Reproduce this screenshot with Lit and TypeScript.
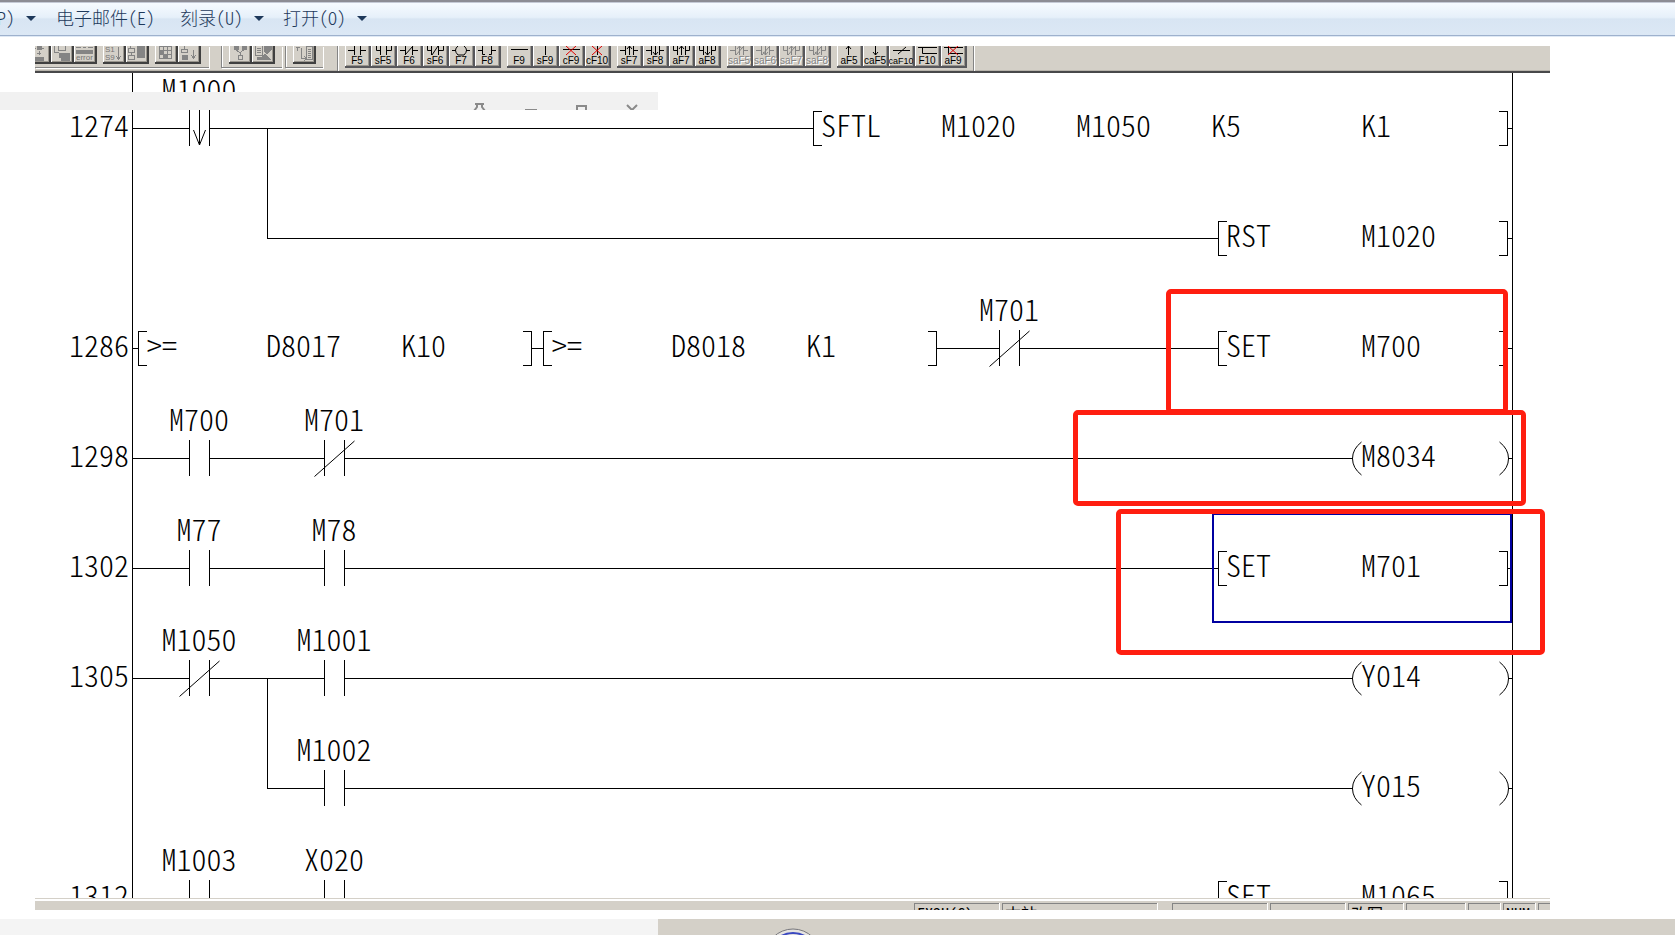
import { LitElement, html, svg, css } from "lit";
import { customElement, property } from "lit/decorators.js";

type Item =
  | { kind: "contact"; x: number; label: string; type?: "nc" | "fall" }
  | { kind: "text"; x: number; label: string }
  | { kind: "open" | "close" | "coil" | "coilEnd"; x: number };

interface Rung {
  step?: string;
  wires: [number, number][];
  branch?: number;
  items: Item[];
}

const c = (x: number, label: string, type?: "nc" | "fall"): Item => ({ kind: "contact", x, label, type });
const t = (x: number, label: string): Item => ({ kind: "text", x, label });
const s = (kind: "open" | "close" | "coil" | "coilEnd", x: number): Item => ({ kind, x });

/* x runs from the left edge of the editor; the power rails sit at 97 and 1477 */
const RUNGS: Rung[] = [
  { step: "1274", wires: [[97, 154], [174, 778], [1472, 1477]], branch: 232,
    items: [c(164, "M1000", "fall"), s("open", 778), t(786, "SFTL"), t(906, "M1020"), t(1041, "M1050"), t(1176, "K5"), t(1326, "K1"), s("close", 1472)] },
  { wires: [[232, 1183], [1472, 1477]],
    items: [s("open", 1183), t(1191, "RST"), t(1326, "M1020"), s("close", 1472)] },
  { step: "1286", wires: [[97, 103], [496, 508], [901, 964], [984, 1183], [1472, 1477]],
    items: [s("open", 103), t(112, ">="), t(231, "D8017"), t(366, "K10"), s("close", 496), s("open", 508), t(517, ">="), t(636, "D8018"), t(771, "K1"), s("close", 901), c(974, "M701", "nc"), s("open", 1183), t(1191, "SET"), t(1326, "M700"), s("close", 1472)] },
  { step: "1298", wires: [[97, 154], [174, 289], [309, 1317], [1473, 1477]],
    items: [c(164, "M700"), c(299, "M701", "nc"), s("coil", 1317), t(1326, "M8034"), s("coilEnd", 1473)] },
  { step: "1302", wires: [[97, 154], [174, 289], [309, 1183], [1472, 1477]],
    items: [c(164, "M77"), c(299, "M78"), s("open", 1183), t(1191, "SET"), t(1326, "M701"), s("close", 1472)] },
  { step: "1305", wires: [[97, 154], [174, 289], [309, 1317], [1473, 1477]], branch: 232,
    items: [c(164, "M1050", "nc"), c(299, "M1001"), s("coil", 1317), t(1326, "Y014"), s("coilEnd", 1473)] },
  { wires: [[232, 289], [309, 1317], [1473, 1477]],
    items: [c(299, "M1002"), s("coil", 1317), t(1326, "Y015"), s("coilEnd", 1473)] },
  { step: "1312", wires: [[97, 154], [174, 289], [309, 1183], [1472, 1477]],
    items: [c(164, "M1003"), c(299, "X020"), s("open", 1183), t(1191, "SET"), t(1326, "M1065"), s("close", 1472)] },
];

@customElement("ladder-rung")
class LadderRung extends LitElement {
  @property({ attribute: false }) rung!: Rung;

  static styles = css`
    :host { display: block; position: relative; height: 110px; flex: none; }
    svg { position: absolute; left: 0; top: 0; overflow: visible; }
    path { fill: none; stroke: #000; stroke-width: 1; }
    .crisp { shape-rendering: crispEdges; }
    .word {
      position: absolute;
      font-family: "Noto Sans CJK SC", sans-serif;
      font-feature-settings: "hwid";
      font-weight: 300;
      font-size: 30px;
      line-height: 30px;
      white-space: pre;
    }
    .on-wire { top: 46px; }
    .above { top: 10px; transform: translateX(-50%); }
    .step { left: 34px; }
  `;

  private shape(i: Item) {
    const x = i.x + 0.5;
    switch (i.kind) {
      case "contact":
        return svg`
          <path class="crisp" d="M${x - 10} 47V83M${x + 10} 47V83" />
          ${i.type === "nc" ? svg`<path d="M${x - 20} 83.5L${x + 20} 48" />` : ""}
          ${i.type === "fall" ? svg`<path d="M${x} 47V82M${x - 6} 67L${x} 82L${x + 6} 67" />` : ""}`;
      case "open":
        return svg`<path class="crisp" d="M${x + 8} 48.5H${x}V82.5H${x + 8}" />`;
      case "close":
        return svg`<path class="crisp" d="M${x - 9} 48.5H${x}V82.5H${x - 9}" />`;
      case "coil":
        return svg`<path d="M${x + 9} 49Q${x} 56 ${x} 65.5T${x + 9} 82" />`;
      case "coilEnd":
        return svg`<path d="M${x - 9} 49Q${x} 56 ${x} 65.5T${x - 9} 82" />`;
      default:
        return "";
    }
  }

  render() {
    const r = this.rung;
    return html`
      <svg width="1515" height="110" aria-hidden="true">
        ${r.wires.map(([a, b]) => svg`<path class="crisp" d="M${a} 65.5H${b + 1}" />`)}
        ${r.branch ? svg`<path class="crisp" d="M${r.branch + 0.5} 65V176" />` : ""}
        ${r.items.map((i) => this.shape(i))}
      </svg>
      ${r.step ? html`<span class="word on-wire step">${r.step}</span>` : ""}
      ${r.items.map((i) =>
        i.kind === "text"
          ? html`<span class="word on-wire" style="left:${i.x}px">${i.label}</span>`
          : i.kind === "contact"
            ? html`<span class="word above" style="left:${i.x}px">${i.label}</span>`
            : ""
      )}
    `;
  }
}

const L = (d: string, color = "#000") => svg`<path d=${d} stroke=${color} />`;
const WIRES: Record<string, unknown> = {
  F5: L("M3 4.5H9M15 4.5H21M9.5 0V9M15.5 0V9"),
  sF5: L("M5.5 0V4.5H9.5V0M9.5 4V9M15.5 9V0M15.5 4.5H20.5V0"),
  F6: L("M3 4.5H9M15 4.5H21M8.5 0V9M15.5 0V9M8 9L16 0"),
  sF6: L("M4.5 0V4.5H8.5V9V0M15.5 9V0M15.5 4.5H20.5V0M9 9L15 0"),
  F7: L("M3 4.5H7M17 4.5H21M9 0Q4 4 9 9H15Q20 4 15 0"),
  F8: L("M3 4.5H7.5V0M7.5 4V8.5H10M21 4.5H16.5V0M16.5 4V8.5H14"),
  F9: L("M4 3.5H21"),
  sF9: L("M12.5 0V9"),
  cF9: [L("M4 3.5H21"), L("M7 0L17 9M17 0L7 9", "#e00000")],
  cF10: [L("M12.5 0V9"), L("M7 0L17 9M17 0L7 9", "#e00000")],
  sF7: L("M3 4.5H8.5M16.5 4.5H21M8.5 0V9M16.5 0V9M12.5 9V0M10 3L12.5 0L15 3"),
  sF8: L("M3 4.5H8.5M16.5 4.5H21M8.5 0V9M16.5 0V9M12.5 0V9M10 6L12.5 9L15 6"),
  aF7: L("M4.5 0V4.5H8.5M8.5 0V9M16.5 0V9M16.5 4.5H20.5V0M12.5 9V0M10 3L12.5 0L15 3"),
  aF8: L("M4.5 0V4.5H8.5M8.5 0V9M16.5 0V9M16.5 4.5H20.5V0M12.5 0V9M10 6L12.5 9L15 6"),
  saF5: L("M3 4.5H8.5M16.5 4.5H21M8.5 0V9M16.5 0V9M9 9L16 1M12.5 9V0M10 3L12.5 0L15 3", "#848484"),
  saF6: L("M3 4.5H8.5M16.5 4.5H21M8.5 0V9M16.5 0V9M9 9L16 1M12.5 0V9M10 6L12.5 9L15 6", "#848484"),
  saF7: L("M4.5 0V4.5H8.5M8.5 0V9M16.5 0V9M16.5 4.5H20.5V0M9 9L16 1M12.5 9V0M10 3L12.5 0L15 3", "#848484"),
  saF8: L("M4.5 0V4.5H8.5M8.5 0V9M16.5 0V9M16.5 4.5H20.5V0M9 9L16 1M12.5 0V9M10 6L12.5 9L15 6", "#848484"),
  aF5: L("M11.5 9V0M9 3L11.5 0L14 3"),
  caF5: L("M12.5 0V9M10 6L12.5 9L15 6"),
  caF10: L("M4 4.5H21M9 8L17 1"),
  F10: L("M3 1.5H22M7.5 1V7.5H22"),
  aF9: [L("M3 1.5H22M7.5 1V7.5H22"), L("M7 0L17 9M17 0L7 9", "#e00000")],
};

const KEY_GROUPS = [
  ["F5", "sF5", "F6", "sF6", "F7", "F8"],
  ["F9", "sF9", "cF9", "cF10"],
  ["sF7", "sF8", "aF7", "aF8"],
  ["saF5", "saF6", "saF7", "saF8"],
  ["aF5", "caF5", "caF10", "F10", "aF9"],
];

const g = (d: string, fill = "none") => svg`<path d=${d} fill=${fill} stroke="#848484" />`;
const TOOLS: Record<string, unknown> = {
  Transfer: [g("M9 0H13V3H9ZM6 11H15V14H6Z", "#848484"), g("M5 2H8M14 2H16M11 5V9M9 7H13")],
  Copy: [g("M3.5 0V6.5H8M7.5 0V4.5H14.5V0"), g("M8 7H18V14H10V11H8Z", "#848484")],
  Error: [g("M2 1H7M9 1H12M14 1H19"), g("M2 4H18V7H2Z", "#848484")],
  Sort: [g("M15.5 1V13M13 10L15.5 13L18 10")],
  Block: [g("M4.5 0V2M2.5 2.5H8.5V6.5H2.5ZM5.5 7V9M2.5 9.5H8.5V13.5H2.5Z"), g("M11 0H18V11H11Z", "#848484")],
  Grid: [g("M4.5 0.5H16.5V12.5H4.5ZM4 4.5H17M4 8.5H17M8.5 0V13M12.5 0V13"), g("M5 5H8V8H5ZM9 9H12V12H9Z", "#848484")],
  Down: [g("M6.5 0V3M3.5 3.5H9.5V6.5H3.5Z"), g("M4 9H9V13H4Z", "#848484"), g("M15.5 4V12M13 9L15.5 12L18 9")],
  Branch: [g("M5 0H9V3H5ZM13 0H17V3H13Z", "#848484"), g("M7.5 4L11 7L14.5 4M11.5 7V9M9.5 9.5H13.5V13H9.5Z")],
  Edit: [g("M3.5 0V9.5H10.5V0M5 2H9M5 4H9M5 6H9"), g("M13 0H19V4L15 8L12 5ZM5 11H10L13 8L18 13H5Z", "#848484")],
  List: [g("M3 1H7M4.5 1V5M8.5 2V12.5H13M11 10L13.5 12.5L11 15"), g("M13.5 0H19.5V13.5H13.5ZM15 3H18M15 5H18M15 7H18M15 9H18M15 11H18")],
};

const tool = (name: string) => html`
  <button class="tool" aria-label=${name}>
    <svg width="21" height="16" viewBox="0 0 21 16" shape-rendering="crispEdges">${TOOLS[name]}</svg>
    ${name === "Error" ? html`<span class="tiny low">error</span>` : ""}
    ${name === "Sort" ? html`<span class="tiny stack">S1<br />S9</span>` : ""}
  </button>`;

@customElement("app-root")
class AppRoot extends LitElement {
  static styles = css`
    :host {
      display: flex;
      flex-direction: column;
      height: 100vh;
      overflow: hidden;
      position: relative;
      background: #fff;
      color: #000;
      font-family: "Liberation Sans", sans-serif;
    }
    button { font: inherit; color: inherit; background: none; border: 0; padding: 0; margin: 0; }

    .menu {
      flex: none;
      box-sizing: border-box;
      height: 37px;
      display: flex;
      align-items: flex-start;
      padding-top: 2px;
      border-top: 2px solid #8c8c94;
      border-bottom: 1px solid #dfe9f5;
      box-shadow: inset 0 -1px #9eb1cd, inset 0 1px #c5cad6;
      background: linear-gradient(#f7fbff 0, #e6f0fa 45%, #d8e5f3 50%, #dce8f5 100%);
      overflow: hidden;
    }
    .menu button {
      display: flex;
      align-items: center;
      flex: none;
      color: #1e395b;
      font-family: "Noto Sans CJK SC", sans-serif;
      font-feature-settings: "hwid";
      font-weight: 300;
      font-size: 18px;
      line-height: 26px;
      white-space: pre;
    }
    .menu i { width: 0; margin: 3px 0 0 11px; border: 5px solid transparent; border-top-color: #1e395b; border-bottom: 0; }
    .clip-left { margin-left: -12px; }
    .menu .clip-left { margin-left: -12px; }
    .menu .mail { margin-left: 20px; }
    .menu .burn { margin-left: 25px; }
    .menu .open { margin-left: 19px; }

    .editor { flex: none; margin: 9px 0 0 35px; width: calc(100% - 160px); display: flex; flex-direction: column; }
    .toolbar {
      box-sizing: border-box;
      height: 27px;
      display: flex;
      align-items: flex-start;
      background: #d4d0c8;
      border-bottom: 2px solid #48484a;
      box-shadow: inset 0 -1px #b8b4ac;
      overflow: hidden;
    }
    .dock {
      flex: none;
      display: flex;
      height: 22px;
      gap: 6px;
      padding: 0 7px;
      box-sizing: border-box;
      border: 1px solid #848484;
      border-width: 0 0 1px 1px;
      box-shadow: 1px 1px #fff, inset 1px 0 #fff;
    }
    .dock.first { padding: 0 8px 0 0; border-left: 0; box-shadow: 1px 1px #fff; }
    .dock.second { margin-left: 12px; }
    .dock.third { margin-left: 3px; }
    .set { display: flex; flex: none; }
    .tool {
      position: relative;
      flex: none;
      box-sizing: border-box;
      width: 23px;
      height: 18px;
      border: solid #404040;
      border-width: 0 2px 2px 0;
      box-shadow: inset 1px 0 #fff, inset -1px -1px #9a968e;
      overflow: hidden;
    }
    .tool svg, .key svg { display: block; }
    .cut { width: 16px; flex: none; overflow: hidden; display: flex; justify-content: flex-end; }
    .tiny { position: absolute; left: 2px; color: #747474; font-size: 8px; line-height: 8px; }
    .low { top: 8px; }
    .stack { top: 0; text-align: left; }
    .keys {
      display: flex;
      flex: none;
      gap: 6px;
      height: 25px;
      margin-left: 14px;
      padding: 0 6px 0 7px;
      border: solid #848484;
      border-width: 0 1px;
      box-shadow: inset 1px 0 #fff, 1px 0 #fff;
    }
    .key {
      box-sizing: border-box;
      width: 26px;
      height: 22px;
      display: flex;
      flex-direction: column;
      align-items: center;
      border: solid #58585c;
      border-width: 0 2px 2px 0;
      box-shadow: inset 1px 0 #fff, inset -1px -1px #9a968e;
      font-size: 10px;
      line-height: 10px;
      overflow: hidden;
      white-space: nowrap;
    }
    .key.long { font-size: 9px; }
    .key svg path, .tool svg path { stroke-width: 1; }
    .key svg path { fill: none; }
    .key:disabled { color: #848484; text-shadow: 1px 1px #fff; }
    .key span { display: block; }

    .ladder { position: relative; height: 825px; overflow: hidden; display: flex; flex-direction: column; }
    .rungs { display: flex; flex-direction: column; margin-top: -10px; }
    .rail { position: absolute; top: 0; bottom: 0; width: 1px; background: #000; }
    .rail.left { left: 97px; }
    .rail.right { left: 1477px; }
    .cursor { position: absolute; box-sizing: border-box; left: 1177px; top: 440px; width: 300px; height: 110px; border: 2px solid #0000a0; }
    .mark { position: absolute; box-sizing: border-box; border: 5px solid #ff1e10; border-radius: 5px; }
    .mark.a { left: 1131px; top: 216px; width: 342px; height: 125px; }
    .mark.b { left: 1038px; top: 337px; width: 453px; height: 96px; }
    .mark.c { left: 1081px; top: 436px; width: 429px; height: 146px; }

    .status {
      box-sizing: border-box;
      height: 12px;
      display: flex;
      gap: 3px;
      overflow: hidden;
      background: #d4d0c8;
      border-top: 1px solid #d4d0c8;
      box-shadow: inset 0 2px #fff;
      padding: 4px 0 0 879px;
    }
    .status span {
      flex: none;
      box-sizing: border-box;
      height: 16px;
      border: solid #848484;
      border-width: 1px 0 0 1px;
      box-shadow: 1px 0 #fff;
      padding-left: 2px;
      font-family: "Noto Sans CJK SC", sans-serif;
      font-feature-settings: "hwid";
      font-size: 16px;
      line-height: 18px;
      white-space: nowrap;
    }
    .w85 { width: 85px; }
    .w156 { width: 155px; margin-right: 12px; }
    .w95 { width: 95px; }
    .w75 { width: 75px; }
    .w56 { width: 55px; }
    .w60 { width: 59px; }
    .w32 { width: 32px; }

    .titlestrip {
      position: absolute;
      left: 0;
      top: 92px;
      width: 658px;
      height: 18px;
      box-sizing: border-box;
      padding-right: 18px;
      display: flex;
      justify-content: flex-end;
      gap: 36px;
      background: #f1f1f1;
      overflow: hidden;
    }
    .titlestrip button { width: 15px; height: 18px; }
    .titlestrip svg { display: block; fill: none; stroke: #8a8a8a; stroke-width: 2; }

    .footer { flex: 1; margin-top: 9px; display: flex; overflow: hidden; }
    .pane { width: 658px; flex: none; background: #f4f4f4; }
    .desk { flex: 1; background: #d4d0c8; padding-left: 105px; overflow: hidden; }
    .desk svg { display: block; }
  `;

  render() {
    return html`
      <nav class="menu">
        <button class="clip-left">(P)<i></i></button>
        <button class="mail">电子邮件(E)</button>
        <button class="burn">刻录(U)<i></i></button>
        <button class="open">打开(O)<i></i></button>
      </nav>

      <main class="editor">
        <div class="toolbar">
          <div class="dock first">
            <div class="set"><div class="cut">${tool("Transfer")}</div>${["Copy", "Error"].map(tool)}</div>
            <div class="set">${["Sort", "Block"].map(tool)}</div>
            <div class="set">${["Grid", "Down"].map(tool)}</div>
          </div>
          <div class="dock second"><div class="set">${["Branch", "Edit"].map(tool)}</div></div>
          <div class="dock third"><div class="set">${tool("List")}</div></div>
          <div class="keys">
            ${KEY_GROUPS.map(
              (keys) => html`<div class="set">
                ${keys.map(
                  (k) => html`<button class="key ${k.length > 4 ? "long" : ""}" ?disabled=${k.startsWith("sa")}>
                    <svg width="24" height="10" viewBox="0 0 24 10">${WIRES[k]}</svg><span>${k}</span>
                  </button>`
                )}
              </div>`
            )}
          </div>
        </div>

        <div class="ladder">
          <div class="rail left"></div>
          <div class="rail right"></div>
          <div class="rungs">${RUNGS.map((r) => html`<ladder-rung .rung=${r}></ladder-rung>`)}</div>
          <div class="cursor"></div>
          <div class="mark a"></div>
          <div class="mark b"></div>
          <div class="mark c"></div>
        </div>

        <div class="status">
          <span class="w85">FX3U(C)</span><span class="w156">本站</span><span class="w95"></span><span class="w75"></span
          ><span class="w56">改写</span><span class="w60"></span><span class="w32"></span><span class="w32">NUM</span
          ><span class="w32"></span>
        </div>
      </main>

      <div class="titlestrip">
        <button aria-label="Pin"><svg width="15" height="18"><path d="M3 12H12M5 12V15L2 19M10 12V15L13 19" /></svg></button>
        <button aria-label="Minimize"><svg width="15" height="18"><path d="M2 18H14" /></svg></button>
        <button aria-label="Maximize"><svg width="15" height="18"><path d="M3 19V14H12V19" /></svg></button>
        <button aria-label="Close"><svg width="15" height="18"><path d="M2 13L12 23M12 13L2 23" /></svg></button>
      </div>

      <div class="footer">
        <div class="pane"></div>
        <div class="desk">
          <svg width="60" height="16" fill="none">
            <circle cx="30" cy="38" r="28" fill="#e6e4e0" stroke="#77777c" />
            <circle cx="30" cy="38" r="24" stroke="#3a48c0" stroke-width="2" />
          </svg>
        </div>
      </div>
    `;
  }
}
